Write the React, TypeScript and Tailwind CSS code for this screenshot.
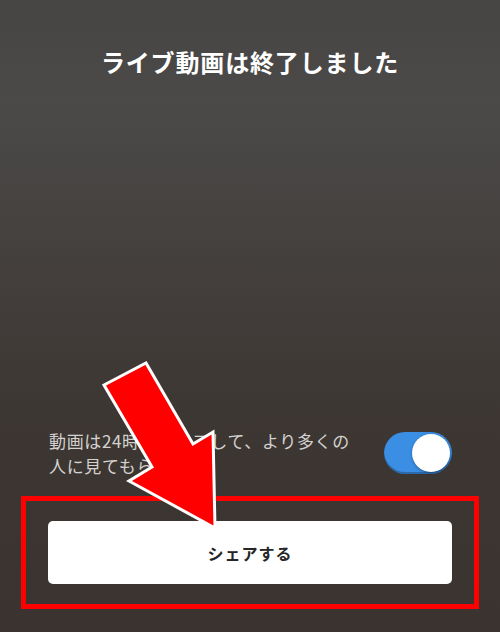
import React from "react";

let Toggle = () => {
	return (
		<div className="flex h-[42px] w-[68px] shrink-0 items-center justify-end rounded-full bg-[#3a8ee4] p-[2px] shadow-[inset_0_-2px_0_rgba(0,0,0,0.25)]">
			<div className="h-[38px] w-[38px] rounded-full bg-white shadow-[0_1px_3px_rgba(0,0,0,0.35)]" />
		</div>
	);
};

let Arrow = () => {
	return (
		<svg
			className="pointer-events-none absolute inset-0"
			width="500"
			height="632"
			viewBox="0 0 500 632"
		>
			<polygon
				points="104,385 146,363 193,444 213,432 215,528 129,481 152,467"
				fill="#ff0000"
				stroke="#ffffff"
				strokeWidth="3"
				strokeLinejoin="miter"
			/>
		</svg>
	);
};

export default function App() {
	return (
		<div className="relative flex h-[632px] w-[500px] flex-col overflow-hidden bg-[linear-gradient(180deg,#464544_0%,#4b4a49_16%,#44403e_40%,#3d3733_65%,#3a332f_100%)] font-['Noto_Sans_CJK_JP','Noto_Sans',sans-serif]">
			<h1 className="pt-[46px] text-center text-[24px] font-bold leading-[32px] tracking-[0.85px] text-white">
				ライブ動画は終了しました
			</h1>

			<div className="flex-1" />

			<div className="flex items-center justify-between pl-[49px] pr-[48px]">
				<p className="text-[17px] leading-[25px] tracking-[0.65px] text-[#d4d2d0]">
					動画は24時間シェアして、より多くの
					<br />
					人に見てもらおう
				</p>
				<Toggle />
			</div>

			<div className="mx-[21px] mb-[23px] mt-[18px] border-[5px] border-[#ff0000] py-[20px] pl-[22px] pr-[22px]">
				<button className="flex h-[63px] w-full items-center justify-center rounded-[5px] bg-white text-[16px] font-bold tracking-[1px] text-[#262626]">
					シェアする
				</button>
			</div>

			<Arrow />
		</div>
	);
}
